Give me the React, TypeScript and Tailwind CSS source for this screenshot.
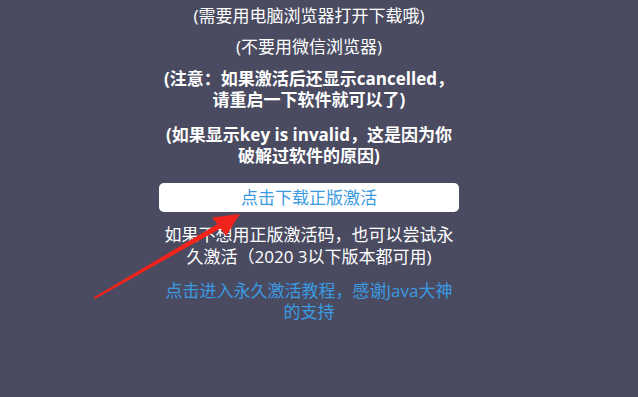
import React from 'react';

const font = { fontFamily: '"Open Sans", "Noto Sans CJK SC", sans-serif' };

function Arrow() {
  // red annotation arrow drawn over the page
  return (
    <svg
      className="absolute left-0 top-0 pointer-events-none"
      width="638"
      height="397"
      viewBox="0 0 638 397"
    >
      <polygon
        points="93.5,297.5 217.5,224 212,217.5 240,214 226,236 220.5,228.5 95,299"
        fill="#f2231b"
      />
    </svg>
  );
}

export default function App() {
  return (
    <div
      className="relative w-full min-h-[397px] bg-[#4a4b61] flex justify-center pr-[20px] text-white text-[17px] overflow-hidden"
      style={font}
    >
      <div className="w-[300px] flex flex-col items-center text-center pt-[5px]">
        <p className="leading-[22px]">(需要用电脑浏览器打开下载哦)</p>
        <p className="leading-[22px] mt-[9px]">(不要用微信浏览器)</p>
        <p className="leading-[21px] mt-[10px] font-bold">
          (注意：如果激活后还显示cancelled，
          <br />
          请重启一下软件就可以了)
        </p>
        <p className="leading-[21px] mt-[14px] font-bold">
          (如果显示key is invalid，这是因为你
          <br />
          破解过软件的原因)
        </p>
        <button className="mt-[17px] w-[300px] h-[29px] bg-white rounded-[5px] text-[#3a9ae2] text-[17px] leading-[29px]">
          点击下载正版激活
        </button>
        <p className="leading-[22px] mt-[12px]">
          如果不想用正版激活码，也可以尝试永
          <br />
          久激活（2020 3以下版本都可用)
        </p>
        <a className="block leading-[21px] mt-[12px] text-[#3a9ae2] cursor-pointer">
          点击进入永久激活教程，感谢Java大神
          <br />
          的支持
        </a>
      </div>
      <Arrow />
    </div>
  );
}
